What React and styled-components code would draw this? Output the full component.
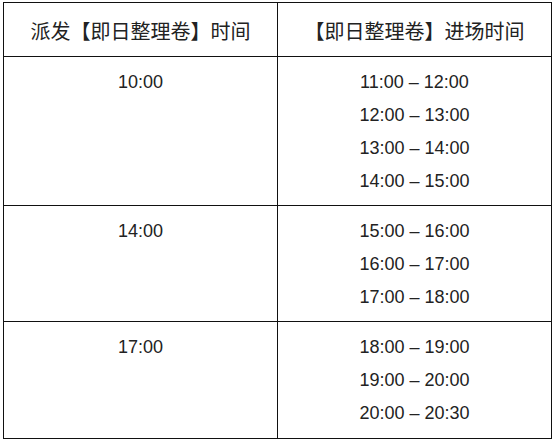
import React from "react";
import styled, { createGlobalStyle } from "styled-components";

const Global = createGlobalStyle`
  html, body { margin: 0; padding: 0; background: #fff; }
  body { font-family: "Liberation Sans", Arial, "Noto Sans CJK SC", sans-serif; color: #222; }
`;

const Table = styled.div`
  margin: 2px 0 0 3px;
  width: 549px;
  box-sizing: border-box;
  display: grid;
  grid-template-columns: 274px 274px;
  border-left: 1px solid #111;
  border-top: 1px solid #111;
`;

const HeadCell = styled.div`
  height: 54px;
  box-sizing: border-box;
  border-right: 1px solid #111;
  border-bottom: 1px solid #111;
  display: flex;
  align-items: center;
  justify-content: center;
  font-family: "Noto Sans CJK SC", "Liberation Sans", sans-serif;
  font-size: 20px;
  color: #222;
  padding-top: 1px;
`;

const Cell = styled.div`
  box-sizing: border-box;
  border-right: 1px solid #111;
  border-bottom: 1px solid #111;
  padding: ${(p) => (p.$extra ? "9px 0 8px" : "9px 0 7px")};
  display: flex;
  flex-direction: column;
  align-items: center;
`;

const Line = styled.div`
  font-size: 18px;
  line-height: 33px;
  color: #222;
`;

const rows = [
  { start: "10:00", slots: ["11:00 – 12:00", "12:00 – 13:00", "13:00 – 14:00", "14:00 – 15:00"] },
  { start: "14:00", slots: ["15:00 – 16:00", "16:00 – 17:00", "17:00 – 18:00"] },
  { start: "17:00", slots: ["18:00 – 19:00", "19:00 – 20:00", "20:00 – 20:30"], extra: true },
];

export default function App() {
  return (
    <>
      <Global />
      <Table>
        <HeadCell>派发【即日整理卷】时间</HeadCell>
        <HeadCell>【即日整理卷】进场时间</HeadCell>
        {rows.map((r) => (
          <React.Fragment key={r.start}>
            <Cell $extra={r.extra}>
              <Line>{r.start}</Line>
            </Cell>
            <Cell $extra={r.extra}>
              {r.slots.map((s) => (
                <Line key={s}>{s}</Line>
              ))}
            </Cell>
          </React.Fragment>
        ))}
      </Table>
    </>
  );
}
